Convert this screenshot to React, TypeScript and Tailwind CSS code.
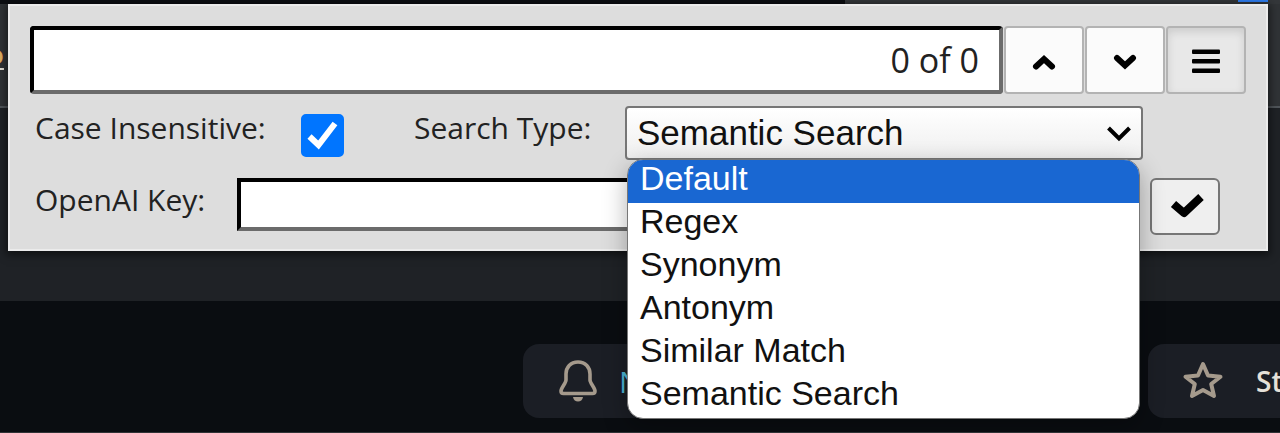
import { useState } from "react";

const searchTypes = ["Default", "Regex", "Synonym", "Antonym", "Similar Match", "Semantic Search"];

function ChevronUp() {
  return (
    <svg viewBox="0 0 24 16" className="h-4 w-6" fill="none" stroke="#000" strokeWidth="6" strokeLinecap="round" aria-hidden="true">
      <path d="M4 12.5 L12 5 L20 12.5" />
    </svg>
  );
}

function ChevronDown() {
  return (
    <svg viewBox="0 0 24 16" className="h-4 w-6" fill="none" stroke="#000" strokeWidth="6" strokeLinecap="round" aria-hidden="true">
      <path d="M4 4 L12 11.5 L20 4" />
    </svg>
  );
}

function FindBar() {
  const [insensitive, setInsensitive] = useState(true);
  const [type, setType] = useState("Semantic Search");
  const [highlighted, setHighlighted] = useState("Default");

  return (
    <section
      aria-label="Find in page"
      className="absolute top-1 right-3 left-2 border-2 border-[#ebebeb] bg-[#dddddd] px-5 pt-5 pb-[14px] shadow-[0_2px_8px_2px_rgba(0,0,0,0.5)]"
    >
      <div className="flex h-17 items-stretch">
        <div className="flex min-w-0 flex-1 items-center rounded-sm border-4 border-t-black border-r-[#6b6b6b] border-b-[#6b6b6b] border-l-black bg-white pr-5">
          <input aria-label="Search" className="h-full min-w-0 flex-1 bg-transparent px-2 text-[32px] outline-none" />
          <span className="font-['Open_Sans','Noto_Sans',sans-serif] text-[34px] text-[#222]">0 of 0</span>
        </div>
        <button aria-label="Previous match" className="ml-px flex w-20 items-center justify-center rounded border-2 border-[#b3b3b3] bg-[#fbfbfb] pt-1">
          <ChevronUp />
        </button>
        <button aria-label="Next match" className="ml-px flex w-20 items-center justify-center rounded border-2 border-[#b3b3b3] bg-[#fbfbfb] pt-1">
          <ChevronDown />
        </button>
        <button
          aria-label="Options"
          aria-pressed="true"
          className="ml-px flex w-20 items-center justify-center rounded border-2 border-[#b3b3b3] bg-[#e8e8e8] shadow-[inset_0_4px_8px_rgba(0,0,0,0.12)]"
        >
          <svg viewBox="0 0 28 26" className="h-[26px] w-7" fill="#000" aria-hidden="true">
            <rect x="0" y="2.500" width="28" height="4.500" rx="1" />
            <rect x="0" y="12" width="28" height="4.500" rx="1" />
            <rect x="0" y="21.500" width="28" height="4.500" rx="1" />
          </svg>
        </button>
      </div>

      <div className="mt-3 flex items-start pl-[5px]">
        <label htmlFor="case" className="w-[266px] font-['Open_Sans','Noto_Sans',sans-serif] text-[30px] leading-[44px] whitespace-nowrap text-[#222]">
          Case Insensitive:
        </label>
        <span className="relative mt-2 size-[43px]">
          <input
            id="case"
            type="checkbox"
            checked={insensitive}
            onChange={(e) => setInsensitive(e.target.checked)}
            className="peer block size-[43px] appearance-none rounded-[5px] border-2 border-[#767676] bg-white checked:border-[#0075ff] checked:bg-[#0075ff]"
          />
          <svg viewBox="0 0 43 43" className="pointer-events-none absolute inset-0 hidden peer-checked:block" fill="none" stroke="#fff" strokeWidth="6" aria-hidden="true">
            <path d="M8.5 22.5 L17.5 31 L34 9.5" />
          </svg>
        </span>
        <label htmlFor="type" className="ml-[70px] w-[211px] font-['Open_Sans','Noto_Sans',sans-serif] text-[30px] leading-[44px] whitespace-nowrap text-[#222]">
          Search Type:
        </label>
        <div className="relative w-[518px]">
          <select
            id="type"
            value={type}
            onChange={(e) => setType(e.target.value)}
            className="block h-[54px] w-full appearance-none rounded-sm border-2 border-[#767676] bg-linear-to-b from-white to-[#efefef] pl-[10px] font-['Liberation_Sans',Arial,sans-serif] text-[35px] leading-[48px] text-[#111]"
          >
            {searchTypes.map((t) => (
              <option key={t}>{t}</option>
            ))}
          </select>
          <svg viewBox="0 0 24 16" className="pointer-events-none absolute top-5 right-3 h-4 w-6" fill="none" stroke="#000" strokeWidth="4" aria-hidden="true">
            <path d="M1.5 2 L12 12.5 L22.5 2" />
          </svg>
          <ul
            role="listbox"
            aria-label="Search types"
            className="absolute top-[53px] right-[3px] left-[2px] z-10 overflow-hidden rounded-2xl border border-[#777] bg-white font-['Liberation_Sans',Arial,sans-serif] text-[34px] text-[#111] shadow-[0_8px_24px_rgba(0,0,0,0.3)]"
          >
            {searchTypes.map((t) => (
              <li
                key={t}
                role="option"
                aria-selected={t === highlighted}
                onMouseEnter={() => setHighlighted(t)}
                onClick={() => setType(t)}
                className="h-[43px] cursor-default pl-3 leading-[36px] aria-selected:bg-[#1967d2] aria-selected:text-white"
              >
                {t}
              </li>
            ))}
          </ul>
        </div>
      </div>

      <div className="mt-[18px] flex items-start pl-[5px]">
        <label htmlFor="key" className="w-[202px] font-['Open_Sans','Noto_Sans',sans-serif] text-[30px] leading-[44px] whitespace-nowrap text-[#222]">
          OpenAI Key:
        </label>
        <input
          id="key"
          className="mr-3 h-[53px] min-w-0 flex-1 border-4 border-t-black border-r-[#6b6b6b] border-b-[#6b6b6b] border-l-black bg-white px-2 text-[32px] outline-none"
        />
        <button aria-label="Save key" className="mr-[26px] flex h-[57px] w-[70px] items-center justify-center rounded-md border-2 border-[#767676] bg-[#efefef]">
          <svg viewBox="0 0 34 28" className="ml-1 h-7 w-[34px]" fill="none" stroke="#000" strokeWidth="8" strokeLinejoin="round" aria-hidden="true">
            <path d="M3.500 11 L14 20 L31 4" />
          </svg>
        </button>
      </div>
    </section>
  );
}

export default function App() {
  return (
    <div className="relative min-h-screen overflow-hidden border-b border-[#303336] bg-[#0a0d11]">
      <div className="flex h-1 justify-end bg-[#0c0e12]">
        <div className="flex w-[34%] justify-end bg-[#34373a] pr-3">
          <div className="h-[2px] w-[30px] bg-[#2f81f7]" />
        </div>
      </div>
      <header className="flex h-[104px] items-start border-b-2 border-[#50555a] bg-[#303336] pt-9">
        <a href="#top" className="-ml-3 border-b-2 border-[#e6e1d8] font-['Open_Sans','Noto_Sans',sans-serif] text-[26px] leading-[28px] font-semibold text-[#e0b060]">
          o
        </a>
      </header>
      <div className="h-[193px] bg-[#1f2226]" />
      <div className="flex gap-2 pt-[43px] pl-[523px]">
        <button className="flex h-[74px] w-[617px] shrink-0 items-center rounded-2xl bg-[#1b1e25] pl-8 font-['Open_Sans','Noto_Sans',sans-serif] text-[30px] text-[#4cb5d5]">
          <svg viewBox="0 0 44 44" className="mr-5 size-11 text-[#a59a8c]" fill="none" stroke="currentColor" strokeWidth="3.6" strokeLinejoin="round" aria-hidden="true">
            <path d="M23 3 C15.500 3 11 8.500 11 15 V21 C11 24 6 29 6 32 Q6 34.500 8.500 34.500 H37.500 Q40 34.500 40 32 C40 29 35 24 35 21 V15 C35 8.500 30.500 3 23 3 Z" />
            <path d="M18 38 H28 C27.500 41 25.500 42.500 23 42.500 C20.500 42.500 18.500 41 18 38 Z" fill="currentColor" stroke="none" />
          </svg>
          Notifications
        </button>
        <button className="flex h-[74px] shrink-0 items-center rounded-2xl bg-[#1b1e25] px-8 font-['Open_Sans','Noto_Sans',sans-serif] text-[28px] font-semibold text-[#e6e1d8]">
          <svg viewBox="0 0 44 44" className="mr-8 size-11" fill="none" stroke="#a59a8c" strokeWidth="4" strokeLinejoin="round" aria-hidden="true">
            <path d="M23 5 L28 16.500 L40.500 17.700 L31.200 25 L34 37 L23 31 L12 37 L14.800 25 L5.500 17.700 L18 16.500 Z" />
          </svg>
          Star
        </button>
      </div>
      <FindBar />
    </div>
  );
}
